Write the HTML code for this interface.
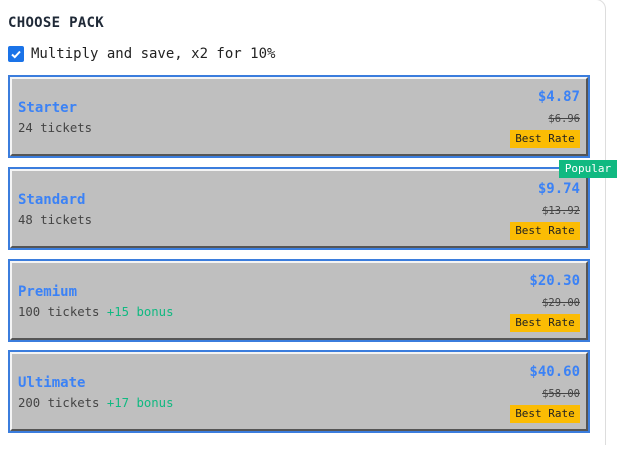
<!DOCTYPE html>
<html><head><meta charset="utf-8"><style>
html,body{margin:0;width:625px;height:450px;overflow:hidden}
body{background:#fff;font-family:"DejaVu Sans Mono","Liberation Mono",monospace;position:relative}
.panel{position:absolute;left:-20px;top:-1px;width:625px;height:445px;border-top:1px solid #ddd;border-right:1px solid #ddd;border-radius:0 10px 0 0}
h1{position:absolute;left:8px;top:15px;margin:0;font-size:14px;font-weight:bold;color:#1f2937;letter-spacing:0.3px}
.cb{position:absolute;left:8px;top:46px;width:16px;height:16px;background:#1a73e8;border-radius:2px}
.lbl{position:absolute;left:31px;top:46px;font-size:14px;color:#222}
.card{position:absolute;left:8px;width:578px;height:79px;border:2px solid #3b7ddd}
.in{position:absolute;left:0;top:0;right:0;bottom:0;background:#bfbfbf;border-top:2px solid #f4f4f4;border-left:2px solid #f4f4f4;border-right:2px solid #555;border-bottom:2px solid #555}
.name{position:absolute;left:6px;top:21px;font-size:14px;font-weight:bold;color:#3b82f6}
.tk{position:absolute;left:6px;top:42px;font-size:12.3px;color:#444}
.tk span{color:#10b981}
.pr{position:absolute;right:6px;top:10px;font-size:14px;font-weight:bold;color:#3b82f6}
.old{position:absolute;right:6px;top:34px;font-size:10.5px;color:#444;text-decoration:line-through}
.br{position:absolute;right:6px;top:51px;width:70px;height:18px;background:#fbbc04;font-size:11px;color:#222;text-align:center;line-height:18px}
.pop{position:absolute;left:559px;top:160px;width:58px;height:18px;background:#10b981;color:#fff;font-size:11px;text-align:center;line-height:18px}
</style></head><body>
<div class="panel"></div>
<h1>CHOOSE PACK</h1>
<div class="cb"><svg width="16" height="16"><path d="M4 8.5l2.8 2.6L12 5.5" stroke="#fff" stroke-width="2" fill="none"/></svg></div>
<div class="lbl">Multiply and save, x2 for 10%</div>
<div class="card" style="top:75px"><div class="in"><div class="name">Starter</div><div class="tk">24 tickets</div><div class="pr">$4.87</div><div class="old">$6.96</div><div class="br">Best Rate</div></div></div>
<div class="card" style="top:167px"><div class="in"><div class="name">Standard</div><div class="tk">48 tickets</div><div class="pr">$9.74</div><div class="old">$13.92</div><div class="br">Best Rate</div></div></div>
<div class="card" style="top:259px"><div class="in"><div class="name">Premium</div><div class="tk">100 tickets <span>+15 bonus</span></div><div class="pr">$20.30</div><div class="old">$29.00</div><div class="br">Best Rate</div></div></div>
<div class="card" style="top:350px"><div class="in"><div class="name">Ultimate</div><div class="tk">200 tickets <span>+17 bonus</span></div><div class="pr">$40.60</div><div class="old">$58.00</div><div class="br">Best Rate</div></div></div>
<div class="pop">Popular</div>
</body></html>
